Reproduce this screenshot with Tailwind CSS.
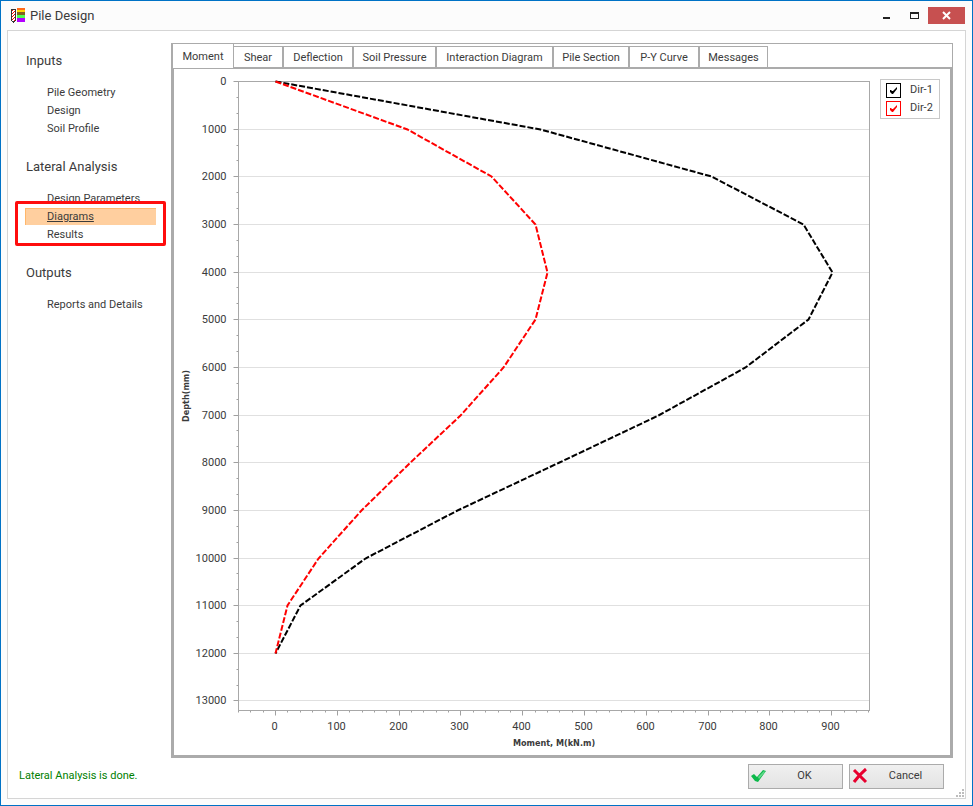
<!DOCTYPE html>
<html lang="en">
<head>
    <meta charset="UTF-8">
    <meta name="viewport" content="width=device-width, initial-scale=1.0">
    <title>Pile Design</title>
    <script src="https://cdn.jsdelivr.net/npm/@tailwindcss/browser@4"></script>
</head>
<body class="flex flex-col min-h-screen px-1.5 pb-1.5 border border-[#0072c6] bg-[#fcfcfc] font-['Tahoma','Roboto',sans-serif] text-[11px] text-[#3b3b3b]">

    <!-- Title bar -->
    <header class="flex items-center h-[29px] shrink-0">
        <svg class="ml-1 mr-[3px] size-4" viewBox="0 0 16 16" shape-rendering="crispEdges">
            <path d="M0 1h5v12H4v1H3v1H2v-1H1v-1H0z" fill="#333"/>
            <path d="M1 2h3v11H1z" fill="#fff"/>
            <path d="M1 2h1v1H1zM3 3h1v1H3zM2 4h1v1H2zM1 5h1v1H1zM3 6h1v1H3zM2 7h1v1H2zM1 8h1v1H1zM3 9h1v1H3zM2 10h1v1H2zM1 11h1v1H1zM3 12h1v1H3z" fill="#f00"/>
            <path d="M6 0h8v2H6z" fill="#ff6a1a"/>
            <path d="M6 2h8v2H6z" fill="#ffd800"/>
            <path d="M6 4h8v3H6z" fill="#806020"/>
            <path d="M6 7h8v3H6z" fill="#4cff4c"/>
            <path d="M6 10h8v4H6z" fill="#b200ff"/>
        </svg>
        <h1 class="flex-1 text-[13px]">Pile Design</h1>
        <button class="grid place-items-center w-7 h-[17px]" aria-label="Minimize">
            <svg class="w-[9px] h-[9px]" viewBox="0 0 9 9" shape-rendering="crispEdges"><path d="M1 6h7v2H1z" fill="#222"/></svg>
        </button>
        <button class="grid place-items-center w-7 h-[17px]" aria-label="Maximize">
            <svg class="w-[9px] h-[9px]" viewBox="0 0 9 9" shape-rendering="crispEdges"><path d="M0 1h9v7H0zM1 3v4h7V3z" fill="#222" fill-rule="evenodd"/></svg>
        </button>
        <button class="grid place-items-center w-[37px] h-[17px] mr-px bg-[#c75050]" aria-label="Close">
            <svg class="w-[9px] h-[9px]" viewBox="0 0 9 9"><path d="M1 1l7 7M8 1L1 8" stroke="#fff" stroke-width="2"/></svg>
        </button>
    </header>

    <main class="relative flex flex-col flex-1 border border-[#d5d5d5] bg-white">
        <div class="flex flex-1 pt-3 pr-3">

            <!-- Navigation -->
            <nav class="w-[163px] shrink-0 pl-[17px] pr-[15px] pt-1.5">
                <h2 class="pl-px text-[13px] leading-6">Inputs</h2>
                <ul class="pt-[11px] pb-[17px] leading-[18px]">
                    <li><a href="#" class="block pl-[22px]">Pile Geometry</a></li>
                    <li><a href="#" class="block pl-[22px]">Design</a></li>
                    <li><a href="#" class="block pl-[22px]">Soil Profile</a></li>
                </ul>
                <h2 class="pl-px text-[13px] leading-6">Lateral Analysis</h2>
                <ul class="relative pt-[11px] pb-[17px] leading-[18px]">
                    <li><a href="#" class="block pl-[22px]">Design Parameters</a></li>
                    <li><a href="#" class="block h-[17px] mb-px pl-[21px] bg-[#ffcf9f] border-t border-l border-[#ffb76b] leading-4 underline">Diagrams</a></li>
                    <li><a href="#" class="block pl-[22px]">Results</a></li>
                    <li class="absolute -left-2.5 -right-2.5 top-[22px] h-[45px] border-3 border-[#ff0d0d] rounded-xs pointer-events-none" aria-hidden="true"></li>
                </ul>
                <h2 class="pl-px text-[13px] leading-6">Outputs</h2>
                <ul class="pt-[11px] leading-[18px]">
                    <li><a href="#" class="block pl-[22px]">Reports and Details</a></li>
                </ul>
            </nav>

            <!-- Tabs and chart -->
            <section class="flex flex-col flex-1 min-w-0">
                <div class="flex items-end h-[26px] border-t border-r border-l-2 border-[#ababab]" role="tablist">
                    <button role="tab" aria-selected="true" class="w-[61px] h-[25px] pt-0.5 border-r border-b border-[#ababab]">Moment</button>
                    <div class="flex flex-1 border-b-2 border-[#ababab]">
                        <button role="tab" class="w-[49px] h-[21px] pt-0.5 border-t border-r border-[#ababab]">Shear</button>
                        <button role="tab" class="w-[70px] h-[21px] pt-0.5 border-t border-x border-[#ababab]">Deflection</button>
                        <button role="tab" class="w-[83px] h-[21px] pt-0.5 border-t border-x border-[#ababab]">Soil Pressure</button>
                        <button role="tab" class="w-[117px] h-[21px] pt-0.5 border-t border-x border-[#ababab]">Interaction Diagram</button>
                        <button role="tab" class="w-[76px] h-[21px] pt-0.5 border-t border-x border-[#ababab]">Pile Section</button>
                        <button role="tab" class="w-[70px] h-[21px] pt-0.5 border-t border-x border-[#ababab]">P-Y Curve</button>
                        <button role="tab" class="w-[69px] h-[21px] pt-0.5 border-t border-x border-[#ababab]">Messages</button>
                    </div>
                </div>
                <div class="relative flex-1 min-h-80 border-x-3 border-b-3 border-[#ababab]">
                    <svg id="chart" class="absolute inset-0 size-full" role="img" aria-label="Moment by depth"></svg>
                    <div class="absolute top-2.5 right-2.5 w-[60px] h-10 pl-[5px] pt-px border border-[#c8c8c8] bg-white leading-[18px]">
                        <label class="flex items-center">
                            <input type="checkbox" checked class="peer appearance-none size-[15px] border border-black">
                            <svg class="w-[9px] h-[9px] -ml-3 mr-3 invisible peer-checked:visible" viewBox="0 0 9 9"><path d="M1 4v2l2 2h1l4-5V1L4 5H3L2 4z" fill="#000"/></svg>
                            Dir-1
                        </label>
                        <label class="flex items-center">
                            <input type="checkbox" checked class="peer appearance-none size-[15px] border border-[#f00]">
                            <svg class="w-[9px] h-[9px] -ml-3 mr-3 invisible peer-checked:visible" viewBox="0 0 9 9"><path d="M1 4v2l2 2h1l4-5V1L4 5H3L2 4z" fill="#f00"/></svg>
                            Dir-2
                        </label>
                    </div>
                </div>
            </section>
        </div>

        <footer class="flex items-center gap-1.5 h-10 pl-[11px] pr-[21px] pb-1">
            <p class="flex-1 text-[#008000]">Lateral Analysis is done.</p>
            <button class="flex items-center w-[95px] h-[25px] border border-[#ababab] bg-linear-to-b from-[#f0f0f0] to-[#e3e3e3]">
                <svg class="ml-0.5 size-4" viewBox="0 0 16 16"><path d="M0 8l3-2l3 3l6-7l3 1l-8 11l-3-1z" fill="#0cb94a"/><path d="M7 9l6-6l1 1l-6 7z" fill="#62d98b"/></svg>
                <span class="flex-1">OK</span>
            </button>
            <button class="flex items-center w-[95px] h-[25px] border border-[#ababab] bg-linear-to-b from-[#f0f0f0] to-[#e3e3e3]">
                <svg class="ml-0.5 size-4" viewBox="0 0 16 16"><path d="M2 2q4 4 12 12M14 1q-6 5-12 13" fill="none" stroke="#e8002f" stroke-width="3"/></svg>
                <span class="flex-1">Cancel</span>
            </button>
        </footer>

        <!-- Resize grip -->
        <svg class="absolute right-0 bottom-0 w-[9px] h-[9px]" viewBox="0 0 9 9" shape-rendering="crispEdges"><path d="M6 0h2v2H6zM3 3h2v2H3zM6 3h2v2H6zM0 6h2v2H0zM3 6h2v2H3zM6 6h2v2H6z" fill="#bdbdbd"/></svg>
    </main>

    <script>
        // Moment (kN.m) at every 1000 mm of depth
        const series = [
            { color: '#000', values: [0, 428, 705, 855, 901, 863, 761, 620, 460, 294, 145, 41, 0] },
            { color: '#f00', values: [0, 213, 349, 420, 440, 420, 369, 299, 218, 139, 69, 20, 0] }
        ];
        const xMin = -60, xMax = 961, yMax = 13200;
        const margin = { top: 12, right: 81, bottom: 45, left: 64 };
        const chart = document.getElementById('chart');

        function line(x1, y1, x2, y2, color) {
            return `<path d="M${x1} ${y1}L${x2} ${y2}" stroke="${color}"/>`;
        }

        function drawChart() {
            const right = chart.clientWidth - margin.right;
            const bottom = chart.clientHeight - margin.bottom;
            const px = v => margin.left + Math.round((v - xMin) / (xMax - xMin) * (right - margin.left)) + 0.5;
            const py = v => margin.top + Math.round(v / yMax * (bottom - margin.top)) + 0.5;
            const x0 = px(xMin), x1 = px(xMax), y0 = py(0), y1 = py(yMax);
            let out = '';

            for (let d = 0; d <= 13000; d += 1000) {
                if (d > 0) out += line(x0, py(d), x1, py(d), '#e0e0e0');
                out += line(x0 - 5, py(d), x0, py(d), '#a0a0a0');
                out += `<text x="${x0 - 12}" y="${py(d) + 3}" text-anchor="end">${d}</text>`;
                if (d < 13000) {
                    out += line(x0 - 2, py(d + 333), x0, py(d + 333), '#a0a0a0');
                    out += line(x0 - 2, py(d + 667), x0, py(d + 667), '#a0a0a0');
                }
            }
            for (let m = -60; m <= 960; m += 20) {
                const major = m % 100 === 0;
                out += line(px(m), y1, px(m), y1 + (major ? 5 : 2), '#a0a0a0');
                if (major) out += `<text x="${px(m) - 1}" y="${y1 + 19}" text-anchor="middle">${m}</text>`;
            }
            out += `<rect x="${x0}" y="${y0}" width="${x1 - x0}" height="${y1 - y0}" fill="none" stroke="#a8a8a8"/>`;

            series.forEach(s => {
                const points = s.values.map((v, i) => px(v) + ',' + py(i * 1000)).join(' ');
                out += `<polyline points="${points}" fill="none" stroke="${s.color}" stroke-width="2" stroke-dasharray="6 2"/>`;
            });

            out += `<text x="${(x0 + x1) / 2}" y="${y1 + 35}" text-anchor="middle" class="font-['Tahoma','DejaVu_Sans_Condensed',sans-serif] font-bold text-[9px]">Moment, M(kN.m)</text>`;
            out += `<text transform="translate(15 ${(y0 + y1) / 2}) rotate(-90)" text-anchor="middle" class="font-['Tahoma','DejaVu_Sans_Condensed',sans-serif] font-bold text-[9px]">Depth(mm)</text>`;
            chart.innerHTML = `<g fill="#3b3b3b">${out}</g>`;
        }

        new ResizeObserver(drawChart).observe(chart);
    </script>
</body>
</html>
